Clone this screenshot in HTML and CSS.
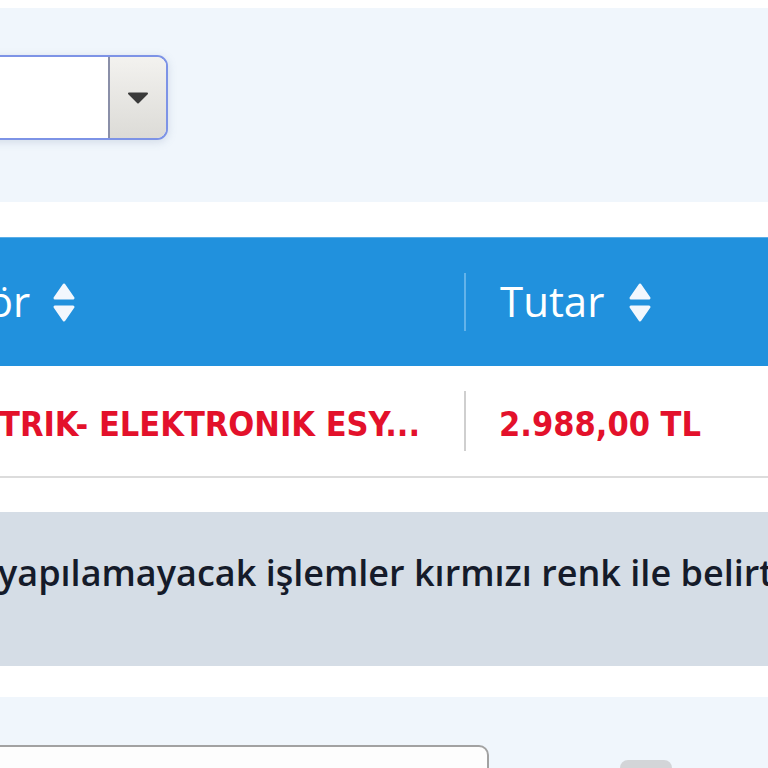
FILE: index.html
```html
<!DOCTYPE html>
<html lang="tr">
<head>
<meta charset="utf-8">
<title>İşlemler</title>
<link rel="stylesheet" href="styles.css">
</head>
<body>
<div class="page">
  <section class="filter-panel">
    <div class="select">
      <div class="select-value"></div>
      <div class="select-btn">
        <svg class="caret" width="22" height="12" viewBox="0 0 22 12"><path d="M2 1.5 H20 L11 10.5 Z" fill="#3a3a3a" stroke="#3a3a3a" stroke-width="2" stroke-linejoin="round"/></svg>
      </div>
    </div>
  </section>

  <section class="table">
    <div class="thead">
      <div class="th th-sector">
        <span>Sektör</span>
        <svg class="sort" width="24" height="40" viewBox="0 0 24 40"><path d="M12 2 L21 15 H3 Z" fill="#f2f7fd" stroke="#f2f7fd" stroke-width="3" stroke-linejoin="round"/><path d="M3 24 H21 L12 37 Z" fill="#f2f7fd" stroke="#f2f7fd" stroke-width="3" stroke-linejoin="round"/></svg>
      </div>
      <div class="hsep"></div>
      <div class="th th-amount">
        <span>Tutar</span>
        <svg class="sort" width="24" height="40" viewBox="0 0 24 40"><path d="M12 2 L21 15 H3 Z" fill="#f2f7fd" stroke="#f2f7fd" stroke-width="3" stroke-linejoin="round"/><path d="M3 24 H21 L12 37 Z" fill="#f2f7fd" stroke="#f2f7fd" stroke-width="3" stroke-linejoin="round"/></svg>
      </div>
    </div>
    <div class="trow">
      <div class="td td-sector">ELEKTRIK- ELEKTRONIK ESY...</div>
      <div class="bsep"></div>
      <div class="td td-amount">2.988,00 TL</div>
    </div>
  </section>

  <section class="info">
    <p>yapılamayacak işlemler kırmızı renk ile belirtilmiştir.</p>
  </section>

  <section class="bottom-panel">
    <div class="input"></div>
    <div class="btn"></div>
  </section>
</div>
</body>
</html>
```
FILE: styles.css
```css
html, body {
  margin: 0;
  padding: 0;
  background: #ffffff;
}
body {
  width: 768px;
  height: 768px;
  overflow: hidden;
}
.page {
  width: 768px;
}

/* top filter panel */
.filter-panel {
  margin-top: 8px;
  height: 194px;
  background: #f0f6fc;
  padding-top: 47px;
  box-sizing: border-box;
}
.select {
  display: flex;
  margin-left: -20px;
  width: 188px;
  height: 85px;
  box-sizing: border-box;
  border: 2px solid #7d93e6;
  border-radius: 0 11px 11px 0;
  box-shadow: 0 2px 8px rgba(120, 140, 170, 0.25);
  overflow: hidden;
  background: #fff;
}
.select-value {
  flex: 1;
  background: #ffffff;
}
.select-btn {
  width: 56px;
  border-left: 2px solid #8a8fa8;
  background: linear-gradient(#f3f2ef, #dcdbd7);
  display: flex;
  align-items: center;
  justify-content: center;
}

/* table */
.table {
  margin-top: 35px;
}
.thead {
  display: flex;
  align-items: center;
  height: 129px;
  background: #2191dd;
  border-top: 1px solid #5aaee8;
  box-sizing: border-box;
  margin-left: -200px;
  font-family: "Open Sans", "Noto Sans", sans-serif;
  font-size: 42px;
  color: #ffffff;
}
.th {
  display: flex;
  align-items: center;
  gap: 22px;
}
.th-sector {
  width: 664px;
  padding-left: 104px;
  box-sizing: border-box;
}
.th-amount {
  padding-left: 34px;
  gap: 24px;
}
.th span {
  line-height: 1;
  padding-bottom: 2px;
}
.sort {
  display: block;
  margin-top: 2px;
}
.hsep {
  width: 2px;
  height: 58px;
  background: #63b3ea;
}

.trow {
  display: flex;
  align-items: center;
  height: 112px;
  padding-top: 6px;
  border-bottom: 2px solid #dcdcdc;
  box-sizing: border-box;
  margin-left: -200px;
  font-family: "DejaVu Sans Condensed", "DejaVu Sans", sans-serif;
  font-stretch: condensed;
  font-weight: bold;
  font-size: 34px;
  color: #e3112b;
}
.td {
  white-space: nowrap;
}
.td-sector {
  width: 664px;
  box-sizing: border-box;
  display: flex;
  justify-content: flex-end;
  padding-right: 44px;
}
.bsep {
  width: 2px;
  height: 60px;
  margin-top: -6px;
  background: #cfcfcf;
}
.td-amount {
  padding-left: 33px;
}

/* info box */
.info {
  margin-top: 34px;
  height: 154px;
  background: #d5dde6;
  overflow: hidden;
}
.info p {
  margin: 0;
  padding-top: 39px;
  margin-left: -2px;
  white-space: nowrap;
  font-family: "Open Sans", "Noto Sans", sans-serif;
  font-weight: 600;
  font-size: 36px;
  line-height: 44px;
  color: #151b2a;
}

/* bottom panel */
.bottom-panel {
  margin-top: 31px;
  height: 80px;
  background: #f0f6fc;
  padding-top: 48px;
  box-sizing: border-box;
  display: flex;
  align-items: flex-start;
}
.input {
  margin-left: -20px;
  width: 509px;
  height: 60px;
  box-sizing: border-box;
  border: 2px solid #a2a2a2;
  border-radius: 0 10px 10px 0;
  background: #fdfdfd;
}
.btn {
  margin-left: 131px;
  margin-top: 15px;
  width: 52px;
  height: 40px;
  border-radius: 8px;
  background: #d3d5d8;
}
```
